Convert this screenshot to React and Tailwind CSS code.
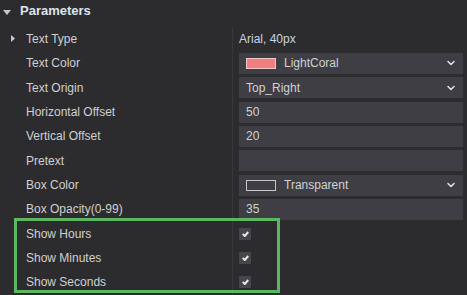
import { ChevronDown } from 'lucide-react';

const rows = [
  { label: 'Text Type', kind: 'plain', value: 'Arial, 40px', caret: true },
  { label: 'Text Color', kind: 'select', value: 'LightCoral', swatch: 'bg-[#f08080] border-[#f0c8c8]' },
  { label: 'Text Origin', kind: 'select', value: 'Top_Right' },
  { label: 'Horizontal Offset', kind: 'input', value: '50' },
  { label: 'Vertical Offset', kind: 'input', value: '20' },
  { label: 'Pretext', kind: 'input', value: '' },
  { label: 'Box Color', kind: 'select', value: 'Transparent', swatch: 'bg-transparent border-[#c8c8c8]' },
  { label: 'Box Opacity(0-99)', kind: 'input', value: '35' },
  { label: 'Show Hours', kind: 'check' },
  { label: 'Show Minutes', kind: 'check' },
  { label: 'Show Seconds', kind: 'check' },
];

function Check() {
  return (
    <div className="w-[12px] h-[12px] bg-[#45454b] flex items-center justify-center">
      <svg width="7" height="6" viewBox="0 0 7 6">
        <path d="M0.8 3 L2.8 5 L6.2 1" stroke="#e6e6e6" strokeWidth="2" fill="none" />
      </svg>
    </div>
  );
}

function Value({ row }) {
  if (row.kind === 'plain') {
    return <span className="text-[#c9d4e2]">{row.value}</span>;
  }
  if (row.kind === 'check') {
    return <Check />;
  }
  return (
    <div className="h-[21px] w-full bg-[#3e3e44] flex items-center pl-[7px] pr-[6px]">
      {row.swatch && <div className={`w-[30px] h-[11px] border mr-[8px] ${row.swatch}`} />}
      <span className="flex-1 text-[#d2d2d2]">{row.value}</span>
      {row.kind === 'select' && <ChevronDown size={12} strokeWidth={3.2} className="text-[#e0e0e0]" />}
    </div>
  );
}

export default function App() {
  return (
    <div
      className="relative w-[467px] h-[295px] bg-[#2c2c2f] overflow-hidden text-[12px]"
      style={{ fontFamily: '"Liberation Sans", Arial, sans-serif' }}
    >
      {/* header */}
      <div className="h-[22px] flex items-center">
        <svg width="8" height="5" viewBox="0 0 8 5" className="ml-[3px] mt-[2px]">
          <path d="M0 0 H8 L4 5 Z" fill="#c8c8c8" />
        </svg>
        <span className="ml-[9px] font-bold text-[13px] text-[#dce4ee]">Parameters</span>
      </div>

      <div className="pt-[5px]">
        {rows.map((row) => (
          <div key={row.label} className="h-[24.33px] flex items-center">
            <div className="w-[232px] h-full flex items-center relative">
              {row.caret && (
                <svg width="4" height="7" viewBox="0 0 4 7" className="absolute left-[11px] top-[8px]">
                  <path d="M0 0 L4 3.5 L0 7 Z" fill="#c8c8c8" />
                </svg>
              )}
              <span className="ml-[26px] text-[#d0d0d0]">{row.label}</span>
            </div>
            <div className="w-px h-full bg-[#38383b]" />
            <div className="flex-1 h-full flex items-center pl-[6px] pr-[4px]">
              <Value row={row} />
            </div>
          </div>
        ))}
      </div>

      {/* highlight */}
      <div className="absolute left-[14px] top-[218px] w-[266px] h-[75px] border-[3px] border-[#5cb860] pointer-events-none" />
    </div>
  );
}
